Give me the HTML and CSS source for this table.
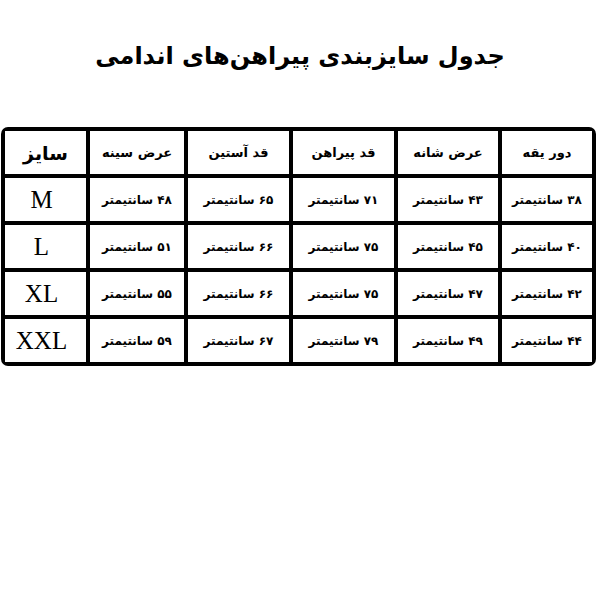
FILE: index.html
```html
<!DOCTYPE html>
<html lang="fa" dir="rtl">
<head>
<meta charset="utf-8">
<link rel="stylesheet" href="styles.css">
</head>
<body>
<h1 class="title">جدول سایزبندی پیراهن‌های اندامی</h1>
<div class="grid">
  <div class="cell head">دور یقه</div>
  <div class="cell head">عرض شانه</div>
  <div class="cell head">قد پیراهن</div>
  <div class="cell head">قد آستین</div>
  <div class="cell head">عرض سینه</div>
  <div class="cell head size-head">سایز</div>

  <div class="cell">۳۸ سانتیمتر</div>
  <div class="cell">۴۳ سانتیمتر</div>
  <div class="cell">۷۱ سانتیمتر</div>
  <div class="cell">۶۵ سانتیمتر</div>
  <div class="cell">۴۸ سانتیمتر</div>
  <div class="cell size">M</div>

  <div class="cell">۴۰ سانتیمتر</div>
  <div class="cell">۴۵ سانتیمتر</div>
  <div class="cell">۷۵ سانتیمتر</div>
  <div class="cell">۶۶ سانتیمتر</div>
  <div class="cell">۵۱ سانتیمتر</div>
  <div class="cell size">L</div>

  <div class="cell">۴۲ سانتیمتر</div>
  <div class="cell">۴۷ سانتیمتر</div>
  <div class="cell">۷۵ سانتیمتر</div>
  <div class="cell">۶۶ سانتیمتر</div>
  <div class="cell">۵۵ سانتیمتر</div>
  <div class="cell size">XL</div>

  <div class="cell">۴۴ سانتیمتر</div>
  <div class="cell">۴۹ سانتیمتر</div>
  <div class="cell">۷۹ سانتیمتر</div>
  <div class="cell">۶۷ سانتیمتر</div>
  <div class="cell">۵۹ سانتیمتر</div>
  <div class="cell size">XXL</div>
</div>
</body>
</html>
```
FILE: styles.css
```css
html, body {
  margin: 0;
  padding: 0;
  background: #fff;
}
body {
  width: 600px;
  height: 600px;
  font-family: "DejaVu Sans", sans-serif;
  color: #000;
}
.title {
  margin: 0;
  padding-top: 36px;
  height: 127px;
  box-sizing: border-box;
  text-align: center;
  font-size: 24px;
  font-weight: bold;
  line-height: 40px;
}
.grid {
  margin-right: 4px;
  margin-left: 1px;
  display: grid;
  grid-template-columns: 90px 100px 101px 101px 94px 81px;
  grid-auto-rows: 43px;
  gap: 4px;
  padding: 4px;
  background: #000;
  border-radius: 7px;
  width: 595px;
  box-sizing: border-box;
}
.cell {
  background: #fff;
  display: flex;
  align-items: center;
  justify-content: center;
  font-size: 12px;
  font-weight: bold;
  white-space: nowrap;
}
.head {
  font-size: 13px;
}
.size-head {
  font-size: 19px;
}
.size {
  font-family: "Liberation Serif", serif;
  font-weight: normal;
  font-size: 25px;
  padding-left: 0;
  padding-right: 8px;
}
```
